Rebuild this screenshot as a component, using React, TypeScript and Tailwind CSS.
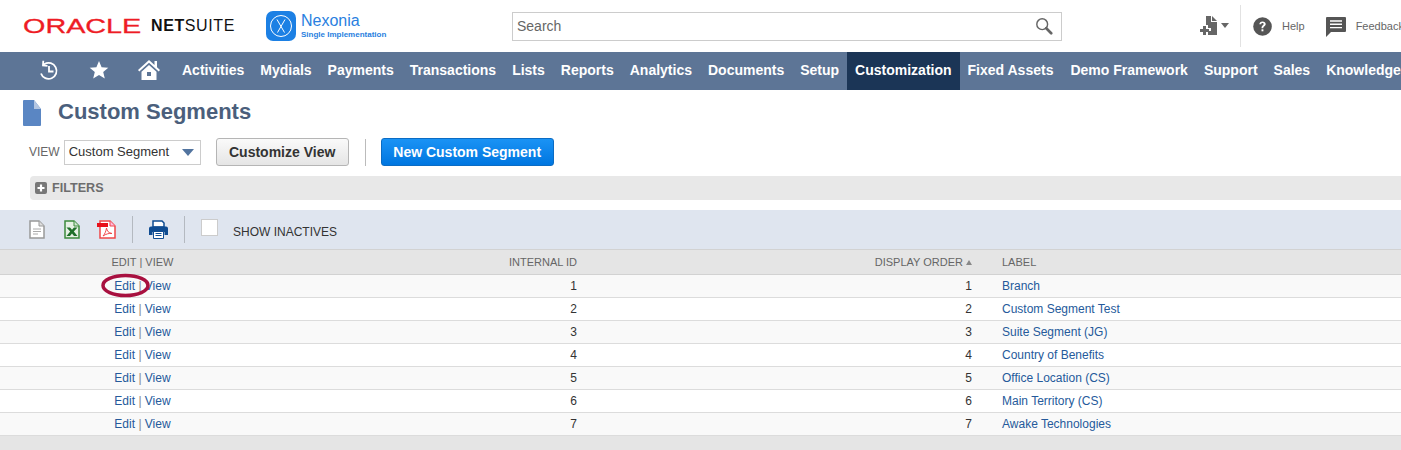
import React from "react";

const navItems = [
  "Activities",
  "Mydials",
  "Payments",
  "Transactions",
  "Lists",
  "Reports",
  "Analytics",
  "Documents",
  "Setup",
  "Customization",
  "Fixed Assets",
  "Demo Framework",
  "Support",
  "Sales",
  "Knowledge",
];

const rows = [
  { id: 1, label: "Branch" },
  { id: 2, label: "Custom Segment Test" },
  { id: 3, label: "Suite Segment (JG)" },
  { id: 4, label: "Country of Benefits" },
  { id: 5, label: "Office Location (CS)" },
  { id: 6, label: "Main Territory (CS)" },
  { id: 7, label: "Awake Technologies" },
];

function Logo() {
  return (
    <div className="flex items-center ml-[23px] w-[213px] shrink-0 mt-[-1px] whitespace-nowrap">
      <span className="block w-[128px] shrink-0 text-[21px] leading-none text-[#ee1c25] origin-left scale-x-[1.37] [-webkit-text-stroke:0.3px_#ee1c25]">
        ORACLE
      </span>
      <span className="text-[16px] leading-none text-[#111] tracking-[0.6px]">
        <b>NET</b>SUITE
      </span>
    </div>
  );
}

function NexoniaBadge() {
  return (
    <div className="flex items-center ml-[30px] w-[246px] shrink-0">
      <div className="w-[30px] h-[30px] rounded-[7px] bg-[#1c80e4] flex items-center justify-center">
        <svg width="24" height="24" viewBox="0 0 24 24" fill="none" stroke="#fff">
          <circle cx="12" cy="12" r="10.5" strokeWidth="1" />
          <path d="M8 5.500 15.500 18.500M16 5.500 8.500 18.500" strokeWidth="1" />
        </svg>
      </div>
      <div className="ml-[5px] text-[#2a7fe0] flex flex-col">
        <span className="text-[16px] leading-[17px]">Nexonia</span>
        <span className="text-[8px] leading-[10px] mt-[1px] font-bold whitespace-nowrap">Single Implementation</span>
      </div>
    </div>
  );
}

function SearchBox() {
  return (
    <div className="w-[550px] h-[29px] shrink-0 border border-[#ccc] flex items-center justify-between pl-[4px] pr-[8px]">
      <span className="text-[14px] text-[#666]">Search</span>
      <svg width="18" height="18" viewBox="0 0 20 20" fill="none" stroke="#666">
        <circle cx="8" cy="8" r="6" strokeWidth="1.600" />
        <path d="M12.500 12.500 18 18" strokeWidth="3" strokeLinecap="round" />
      </svg>
    </div>
  );
}

function HeaderTools() {
  return (
    <div className="flex items-center ml-[138px] h-full text-[11px] text-[#666]">
      <svg width="21" height="21" viewBox="0 0 21 21" fill="#666">
        <path d="M6 0h5v6h6v13H8v-4h3v-3H8V9H6z" />
        <path d="M12 0l5 5h-5z" />
        <path d="M3 10h3v3h3v3H6v3H3v-3H0v-3h3z" />
      </svg>
      <svg className="ml-[0px] mb-[2px]" width="8" height="5" viewBox="0 0 8 5" fill="#666">
        <path d="M0 0h8L4 5z" />
      </svg>
      <div className="w-px h-[42px] bg-[#e2e2e2] ml-[11px]" />
      <svg className="ml-[12px]" width="19" height="19" viewBox="0 0 19 19">
        <circle cx="9.500" cy="9.500" r="9.300" fill="#555" />
        <path d="M6.300 7.300c.1-1.900 1.400-2.900 3.200-2.900s3.200 1 3.200 2.600c0 2.300-2.400 2.200-2.400 4.200H8.500c0-2.800 2.200-2.900 2.200-4.100 0-.7-.5-1.100-1.200-1.100-.8 0-1.200.5-1.300 1.300z" fill="#fff" />
        <rect x="8.500" y="12.300" width="1.900" height="2" fill="#fff" />
      </svg>
      <span className="ml-[10px]">Help</span>
      <svg className="ml-[21px] mt-[1px]" width="20" height="20" viewBox="0 0 20 20">
        <path d="M1 0h18a1 1 0 0 1 1 1v13a1 1 0 0 1-1 1H5l-5 5V1a1 1 0 0 1 1-1z" fill="#555" />
        <path d="M4 4h12M4 7.300h12M4 10.600h12" stroke="#fff" strokeWidth="1.400" />
      </svg>
      <span className="ml-[10px] whitespace-nowrap">Feedback</span>
    </div>
  );
}

function NavBar() {
  return (
    <nav className="h-[38px] bg-[#5d7596] flex items-stretch overflow-hidden text-white">
      <div className="flex items-center shrink-0 pl-[38px] w-[174px] pb-[3px]">
        <svg width="22" height="22" viewBox="0 0 22 22" fill="none" stroke="#fff" strokeWidth="1.800">
          <path d="M3 14.500a8 8 0 1 0 3.500-9.500L5 6" />
          <path d="M5.300 1.800 5 6.500l4.500.3" />
          <path d="M11 7v5.500h4.500" />
        </svg>
        <svg className="ml-[29px]" width="20" height="20" viewBox="0 0 20 20" fill="#fff">
          <path d="M10 1l2.600 6.200 6.700.5-5.100 4.400 1.600 6.500L10 15.100l-5.800 3.500 1.600-6.500L.7 7.700l6.700-.5z" />
        </svg>
        <svg className="ml-[29px]" width="22" height="22" viewBox="0 0 22 22" fill="#fff">
          <path d="M11 1 0 11l1.300 1.500L11 3.800l9.700 8.700L22 11l-3-2.700V2h-2.500v4z" />
          <path d="M11 6 3.500 12.700V21h15v-8.300zM9 13h4v4H9z" fillRule="evenodd" />
        </svg>
      </div>
      <div className="flex items-stretch">
        {navItems.map((item) => (
          <a
            key={item}
            className={`flex items-center px-[8px] pb-[2px] text-[14px] font-bold whitespace-nowrap ${
              item === "Customization" ? "bg-[#1b3556]" : ""
            } ${item === "Fixed Assets" ? "pr-[9px]" : ""}`}
          >
            {item}
          </a>
        ))}
      </div>
    </nav>
  );
}

function DocIcon() {
  return (
    <svg width="16" height="19" viewBox="0 0 16 19" fill="none">
      <path d="M1 1h9l5 5v12H1z" fill="#fff" stroke="#999" strokeWidth="1.500" />
      <path d="M10 1v5h5" fill="#ddd" stroke="#999" />
      <path d="M4 9h8M4 11.500h8M4 14h5" stroke="#aaa" />
    </svg>
  );
}

function XlsIcon() {
  return (
    <svg width="16" height="19" viewBox="0 0 16 19" fill="none">
      <path d="M1 1h9l5 5v12H1z" fill="#e6f1e4" stroke="#3d8a3d" strokeWidth="1.500" />
      <path d="M10 1v5h5" fill="#cfe5cf" stroke="#3d8a3d" />
      <path d="M2.500 7.500h3.500l2 2.300 2-2.300h3.500l-3.700 4 3.700 4.500H10l-2-2.500L6 16H2.500l3.700-4.500z" fill="#1f6f2a" />
    </svg>
  );
}

function PdfIcon() {
  return (
    <svg width="19" height="19" viewBox="0 0 19 19" fill="none">
      <path d="M3 1h10l5 5v12H3z" fill="#fff" stroke="#f0474a" strokeWidth="1.500" />
      <path d="M13 1v5h5" fill="#fbd" stroke="#f0474a" />
      <rect x="0" y="3" width="11" height="4" fill="#e8101a" />
      <path d="M6 16c2-2 3-5 3.500-8 .5 3 2 5 5.500 5.500-3-.5-6 .5-9 2.500z" stroke="#f0474a" />
    </svg>
  );
}

function PrintIcon() {
  return (
    <svg width="19" height="19" viewBox="0 0 19 19">
      <path d="M4 1h9l2 2v4H4z" fill="#fff" stroke="#0f4c92" strokeWidth="1.500" />
      <path d="M2 6.500h15a2 2 0 0 1 2 2V15h-3.500v-3h-12v3H0V8.500a2 2 0 0 1 2-2z" fill="#0f4c92" />
      <path d="M4.500 11.500h10V18.500h-10z" fill="#fff" stroke="#0f4c92" />
      <path d="M6.500 13.500h6M6.500 15.500h6" stroke="#0f4c92" />
    </svg>
  );
}

function TitleRow() {
  return (
    <div className="flex items-center h-[43px] pl-[23px]">
      <svg width="18" height="26" viewBox="0 0 18 26" className="mt-[2px]">
        <path d="M1 0h10l7 9v16a1 1 0 0 1-1 1H1a1 1 0 0 1-1-1V1a1 1 0 0 1 1-1z" fill="#5a86c3" />
        <path d="M11 0l7 9h-7z" fill="#b3c6e2" />
      </svg>
      <h1 className="ml-[17px] text-[22px] font-bold text-[#4b5f7c] leading-none">Custom Segments</h1>
    </div>
  );
}

function ViewRow() {
  return (
    <div className="flex items-center h-[28px] mt-[5px] pl-[29px]">
      <span className="text-[12px] text-[#666]">VIEW</span>
      <div className="ml-[4px] w-[137px] h-[25px] border border-[#ccc] flex items-center justify-between pl-[4px] pr-[6px] text-[13px] text-[#333]">
        Custom Segment
        <svg width="12" height="7" viewBox="0 0 12 7" fill="#52749f">
          <path d="M0 0h12L6 7z" />
        </svg>
      </div>
      <button className="ml-[15px] w-[133px] h-[28px] rounded-[3px] border border-[#b5b5b5] bg-gradient-to-b from-[#fafafa] to-[#e5e5e5] text-[14px] font-bold text-[#333]">
        Customize View
      </button>
      <div className="w-px h-[27px] bg-[#bbb] ml-[16px]" />
      <button className="ml-[15px] w-[173px] h-[28px] rounded-[3px] border border-[#0b6cc4] bg-gradient-to-b from-[#1a93f5] to-[#0076e0] text-[14px] font-bold text-white">
        New Custom Segment
      </button>
    </div>
  );
}

function FiltersBar() {
  return (
    <div className="ml-[30px] mt-[10px] h-[24px] bg-[#e8e8e8] rounded-l-[4px] flex items-center pl-[5px] text-[12.6px] font-bold text-[#6d6d6d]">
      <svg width="12" height="12" viewBox="0 0 12 12">
        <rect width="12" height="12" rx="2" fill="#777" />
        <path d="M6 2.500v7M2.500 6h7" stroke="#fff" strokeWidth="2.200" />
      </svg>
      <span className="ml-[5px]">FILTERS</span>
    </div>
  );
}

function Toolbar() {
  return (
    <div className="mt-[10px] h-[39px] bg-[#dfe5ef] flex items-center pl-[29px]">
      <DocIcon />
      <div className="ml-[19px]">
        <XlsIcon />
      </div>
      <div className="ml-[17px]">
        <PdfIcon />
      </div>
      <div className="w-px h-[27px] bg-[#b4b9c0] ml-[16px]" />
      <div className="ml-[16px]">
        <PrintIcon />
      </div>
      <div className="w-px h-[27px] bg-[#b4b9c0] ml-[16px]" />
      <div className="ml-[16px] mb-[5px] w-[17px] h-[17px] bg-white border border-[#ccc]" />
      <span className="ml-[15px] text-[12px] text-[#333] mt-[4px]">SHOW INACTIVES</span>
    </div>
  );
}

function SegmentTable() {
  return (
    <div className="text-[12px]">
      <div className="grid grid-cols-[285px_292px_395px_1fr] h-[26px] items-center bg-[#e5e5e5] border-y border-[#d2d2d2] text-[11px] text-[#666]">
        <div className="text-center">EDIT | VIEW</div>
        <div className="text-right">INTERNAL ID</div>
        <div className="flex items-center justify-end gap-[3px]">
          DISPLAY ORDER
          <svg width="6" height="5" viewBox="0 0 6 5" fill="#888">
            <path d="M3 0l3 5H0z" />
          </svg>
        </div>
        <div className="pl-[30px]">LABEL</div>
      </div>
      {rows.map((row, i) => (
        <div
          key={row.id}
          className={`relative grid grid-cols-[285px_292px_395px_1fr] h-[23px] items-center border-b border-[#dcdcdc] text-[#333] ${
            i % 2 === 0 ? "bg-[#f9f9f9]" : "bg-white"
          }`}
        >
          <div className="text-center text-[#255a9b]">
            Edit <span className="text-[#888]">|</span> View
          </div>
          <div className="text-right">{row.id}</div>
          <div className="text-right">{row.id}</div>
          <div className="pl-[30px] text-[#255a9b]">{row.label}</div>
          {i === 0 && (
            <svg className="absolute left-[101px] top-[-2px]" width="49" height="25" viewBox="0 0 49 25" fill="none">
              <ellipse cx="24.500" cy="12.500" rx="22.500" ry="10" stroke="#a8103f" strokeWidth="3.500" />
            </svg>
          )}
        </div>
      ))}
      <div className="h-[15px] bg-[#e5e5e5]" />
    </div>
  );
}

export default function App() {
  return (
    <div className="w-[1401px] h-[450px] overflow-hidden bg-white font-['Liberation_Sans',Arial,sans-serif]">
      <header className="h-[52px] flex items-center overflow-hidden">
        <Logo />
        <NexoniaBadge />
        <SearchBox />
        <HeaderTools />
      </header>
      <NavBar />
      <TitleRow />
      <ViewRow />
      <FiltersBar />
      <Toolbar />
      <SegmentTable />
    </div>
  );
}
